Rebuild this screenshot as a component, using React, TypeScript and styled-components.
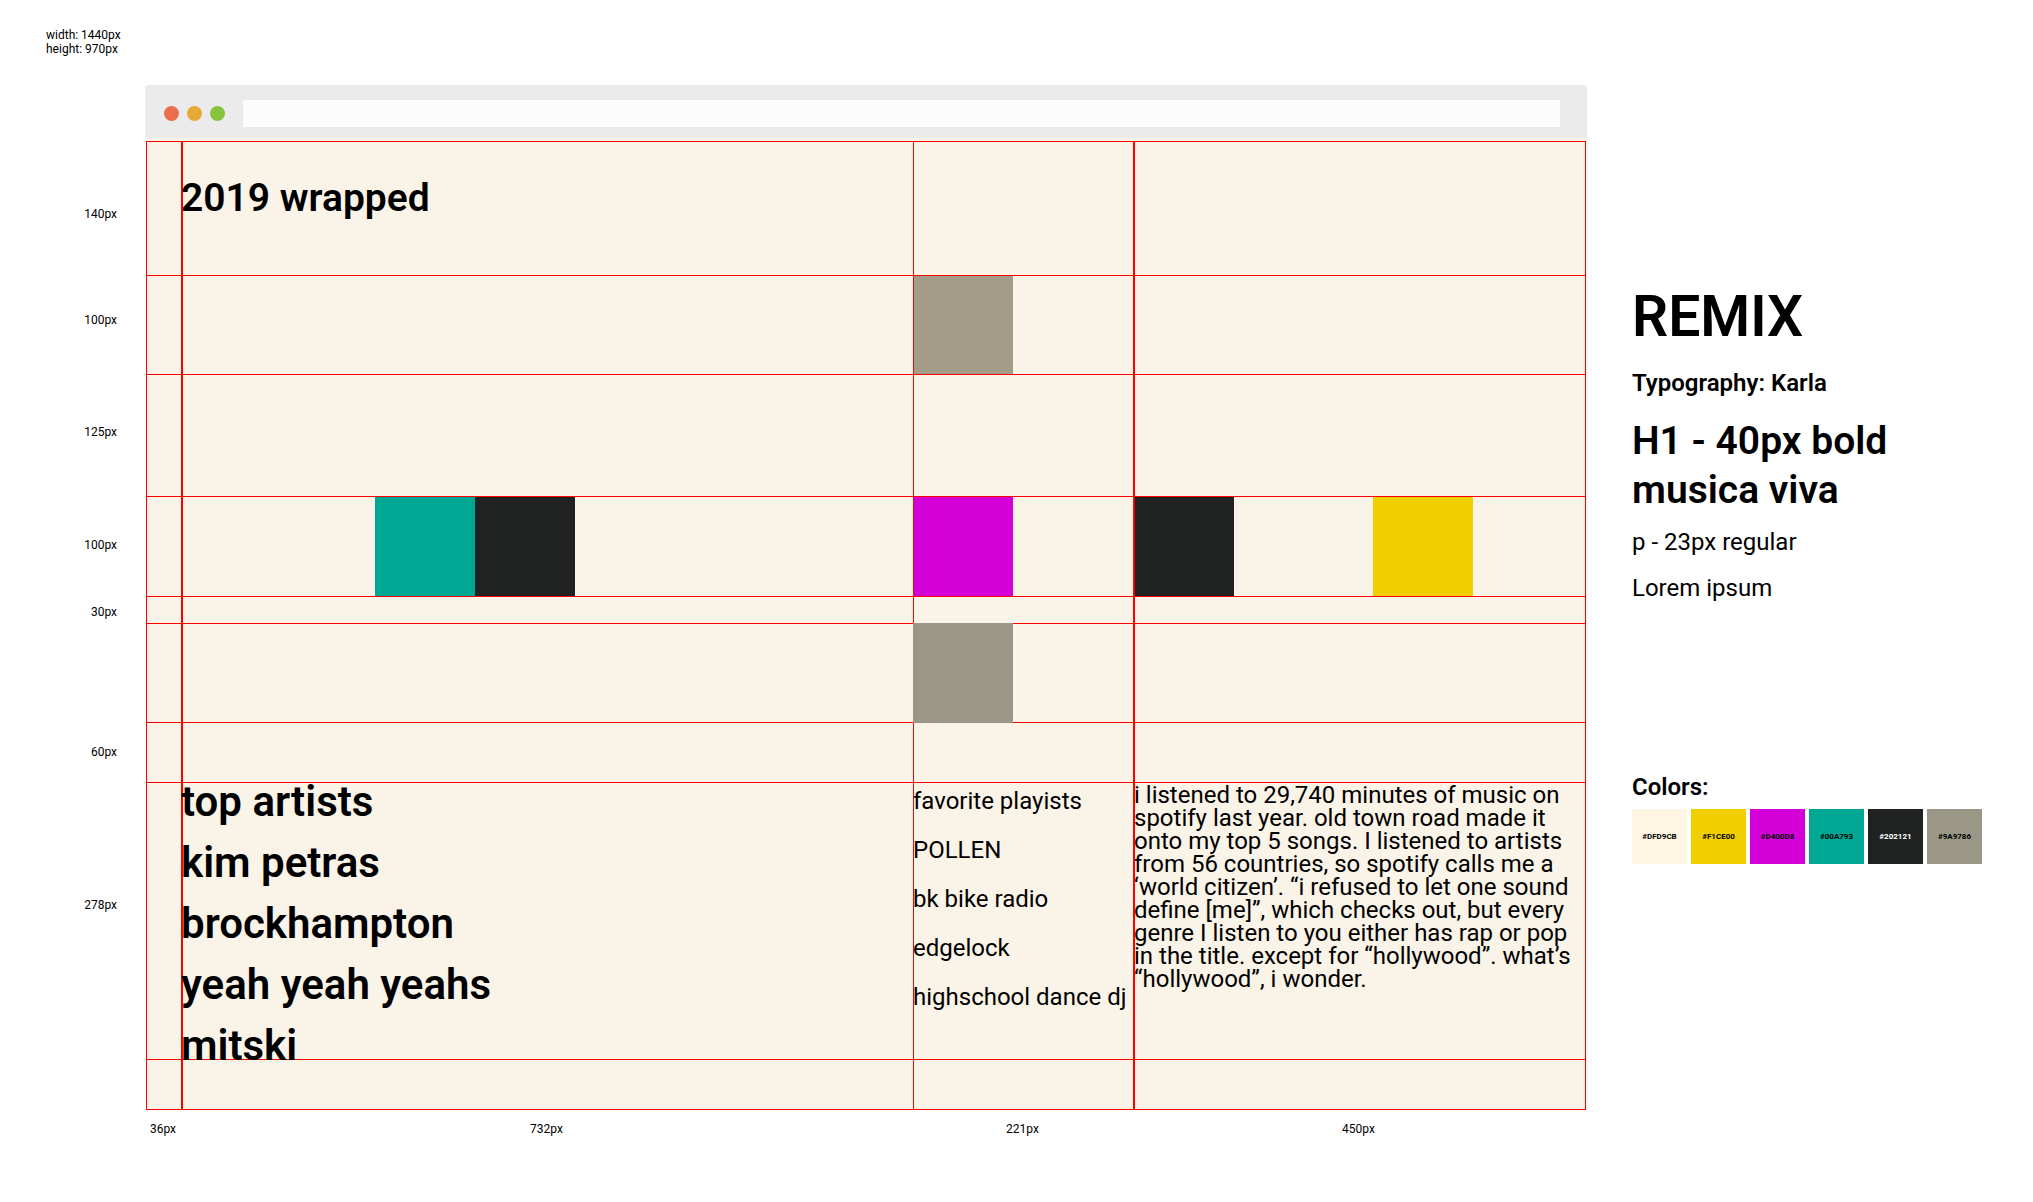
import React from 'react';
import styled, { createGlobalStyle } from 'styled-components';

const line = '#ff0000';

const GlobalStyle = createGlobalStyle`
  * { box-sizing: border-box; }
  body { margin: 0; background: #fff; color: #000; font-family: Roboto, "Open Sans", sans-serif; }
  h1, h2, h3, p, ul { margin: 0; padding: 0; }
  ul { list-style: none; }
`;

const Page = styled.div`
  min-width: 1500px;
`;

const Note = styled.p`
  padding: 28px 0 0 46px;
  height: 85px;
  font-size: 12px;
  line-height: 14px;
`;

const Sheet = styled.main`
  display: grid;
  grid-template-columns: 145px minmax(0, 1fr) 445px;
`;

const RowSizes = styled.ul`
  display: grid;
  grid-template-rows: 106px 112px 113px 67px 140px 153px 14px;
  padding: 122px 28px 0 0;
  align-content: start;
  text-align: right;
`;

const Size = styled.li`
  font-size: 12px;
  line-height: 14px;
`;

const Browser = styled.section`
  min-width: 0;
`;

const Toolbar = styled.div`
  display: flex;
  align-items: center;
  gap: 8px;
  margin-right: 1px;
  padding: 15px 27px 11px 19px;
  background: #ebebeb;
  border-radius: 4px 4px 0 0;
`;

const Dot = styled.span<{ $color: string }>`
  width: 15px;
  height: 15px;
  border-radius: 50%;
  background: ${(p) => p.$color};
`;

const Address = styled.input`
  flex: 1;
  height: 27px;
  margin-left: 10px;
  padding: 0 8px;
  border: 0;
  background: #fcfcfc;
  font: inherit;
`;

const Board = styled.div`
  margin-left: 1px;
  padding: 3px 2px 0 0;
  background: #faf3e7;
`;

const columns = '36px 731fr 221fr 451fr';

const Grid = styled.div`
  display: grid;
  grid-template-columns: ${columns};
  grid-template-rows: 134px 99px 122px 100px 27px 99px 60px 277px 50px;
  border: solid ${line};
  border-width: 1px 0 0 1px;
`;

const Cell = styled.div<{ $thick?: boolean; $indent?: number; $gap?: number }>`
  display: flex;
  min-width: 0;
  gap: ${(p) => p.$gap ?? 0}px;
  padding-left: ${(p) => p.$indent ?? 0}px;
  border: solid ${line};
  border-width: 0 ${(p) => (p.$thick ? 2 : 1)}px 1px 0;
`;

const Block = styled.div<{ $color: string; $wide?: boolean; $over?: boolean }>`
  width: ${(p) => (p.$over || p.$wide ? 100 : 99)}px;
  margin: ${(p) => (p.$over ? '-1px 0 -1px -1px' : '0')};
  background: ${(p) => p.$color};
`;

const Title = styled.h1`
  margin-left: -2px;
  padding-top: 33px;
  font-size: 39px;
  font-weight: 600;
  line-height: 46px;
`;

const Artists = styled.ul`
  display: flex;
  flex-direction: column;
  gap: 25px;
  margin-left: -2px;
  padding-top: 1px;
  font-size: 42px;
  font-weight: 600;
  line-height: 36px;
`;

const Playlists = styled.ul`
  display: flex;
  flex-direction: column;
  gap: 14px;
  margin-left: -1px;
  padding-top: 1px;
  font-size: 24px;
  line-height: 35px;
  white-space: nowrap;
`;

const Story = styled.p`
  margin-left: -1px;
  padding-top: 1px;
  font-size: 24px;
  line-height: 23px;
`;

const ColumnSizes = styled.ul`
  display: grid;
  grid-template-columns: ${columns};
  padding: 12px 4px 0 0;
  text-align: center;
`;

const Guide = styled.aside`
  padding: 200px 44px 0 44px;
`;

const Brand = styled.h2`
  font-size: 57px;
  font-weight: 600;
  line-height: 64px;
`;

const Label = styled.h3`
  font-size: 24px;
  font-weight: 600;
  line-height: 28px;
`;

const Typography = styled.div`
  padding-top: 20px;
`;

const Heading = styled.p`
  margin: 20px 0 13px;
  font-size: 39px;
  font-weight: 600;
  line-height: 49px;
`;

const Body = styled.p`
  margin-bottom: 18px;
  font-size: 24px;
  line-height: 28px;
`;

const Palette = styled.div`
  padding-top: 153px;
`;

const Swatches = styled.ul`
  display: flex;
  gap: 4px;
  margin-top: 8px;
`;

const Swatch = styled.li<{ $color: string; $text?: string }>`
  display: flex;
  align-items: center;
  justify-content: center;
  width: 55px;
  height: 55px;
  background: ${(p) => p.$color};
  color: ${(p) => p.$text ?? '#000'};
  font-size: 8px;
  font-weight: 700;
`;

const rowSizes = ['140px', '100px', '125px', '100px', '30px', '60px', '278px'];
const columnSizes = ['36px', '732px', '221px', '450px'];
const artists = ['top artists', 'kim petras', 'brockhampton', 'yeah yeah yeahs', 'mitski'];
const playlists = ['favorite playists', 'POLLEN', 'bk bike radio', 'edgelock', 'highschool dance dj'];
const swatches = [
  { name: '#DFD9CB', color: '#fff5e3' },
  { name: '#F1CE00', color: '#f1ce00' },
  { name: '#D400D8', color: '#d400d8' },
  { name: '#00A793', color: '#00a793' },
  { name: '#202121', color: '#202121', text: '#fff' },
  { name: '#9A9786', color: '#9a9786' },
];

type RowProps = {
  main?: React.ReactNode;
  mainIndent?: number;
  middle?: React.ReactNode;
  last?: React.ReactNode;
  lastGap?: number;
};

function Row({ main, mainIndent, middle, last, lastGap }: RowProps) {
  return (
    <>
      <Cell $thick />
      <Cell $indent={mainIndent}>{main}</Cell>
      <Cell $thick>{middle}</Cell>
      <Cell $gap={lastGap}>{last}</Cell>
    </>
  );
}

export default function App() {
  return (
    <Page>
      <GlobalStyle />
      <Note>
        width: 1440px
        <br />
        height: 970px
      </Note>
      <Sheet>
        <RowSizes>
          {rowSizes.map((size, i) => (
            <Size key={i}>{size}</Size>
          ))}
        </RowSizes>
        <Browser>
          <Toolbar>
            <Dot $color="#ea6e4c" />
            <Dot $color="#e5a936" />
            <Dot $color="#86c43c" />
            <Address type="text" aria-label="Address" />
          </Toolbar>
          <Board>
            <Grid>
              <Row main={<Title>2019 wrapped</Title>} />
              <Row middle={<Block $color="#a39c88" />} />
              <Row />
              <Row
                mainIndent={192}
                main={
                  <>
                    <Block $wide $color="#00a793" />
                    <Block $wide $color="#202121" />
                  </>
                }
                middle={<Block $color="#d400d8" />}
                lastGap={139}
                last={
                  <>
                    <Block $color="#202121" />
                    <Block $wide $color="#f1ce00" />
                  </>
                }
              />
              <Row />
              <Row middle={<Block $over $color="#9a9786" />} />
              <Row />
              <Row
                main={
                  <Artists>
                    {artists.map((name) => (
                      <li key={name}>{name}</li>
                    ))}
                  </Artists>
                }
                middle={
                  <Playlists>
                    {playlists.map((name) => (
                      <li key={name}>{name}</li>
                    ))}
                  </Playlists>
                }
                last={
                  <Story>
                    i listened to 29,740 minutes of music on spotify last year. old town road made it onto my top 5
                    songs. I listened to artists from 56 countries, so spotify calls me a ‘world citizen’. “i refused to
                    let one sound define [me]”, which checks out, but every genre I listen to you either has rap or pop
                    in the title. except for “hollywood”. what’s “hollywood”, i wonder.
                  </Story>
                }
              />
              <Row />
            </Grid>
          </Board>
          <ColumnSizes>
            {columnSizes.map((size) => (
              <Size key={size}>{size}</Size>
            ))}
          </ColumnSizes>
        </Browser>
        <Guide>
          <Brand>REMIX</Brand>
          <Typography>
            <Label>Typography: Karla</Label>
            <Heading>
              H1 - 40px bold
              <br />
              musica viva
            </Heading>
            <Body>p - 23px regular</Body>
            <Body>Lorem ipsum</Body>
          </Typography>
          <Palette>
            <Label>Colors:</Label>
            <Swatches>
              {swatches.map((s) => (
                <Swatch key={s.name} $color={s.color} $text={s.text}>
                  {s.name}
                </Swatch>
              ))}
            </Swatches>
          </Palette>
        </Guide>
      </Sheet>
    </Page>
  );
}
